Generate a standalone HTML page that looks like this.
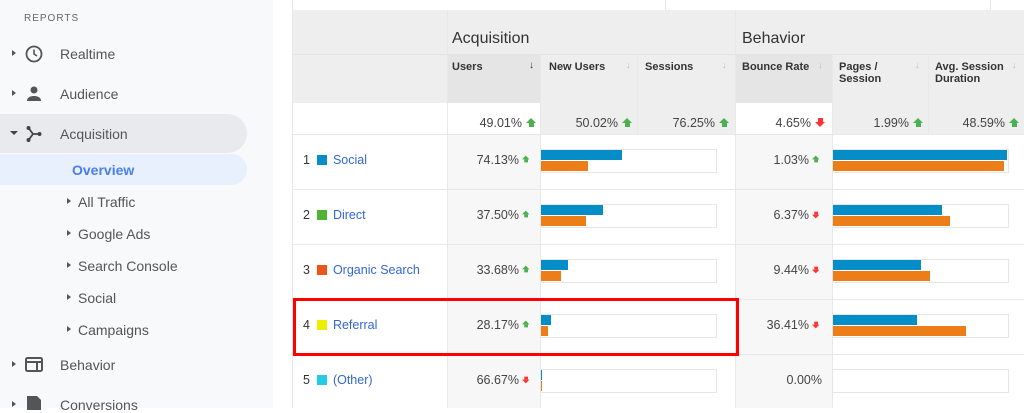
<!DOCTYPE html><html><head><style>
*{margin:0;padding:0;box-sizing:border-box}
body{width:1024px;height:408px;overflow:hidden;background:#fff;font-family:"Liberation Sans",sans-serif;position:relative;color:#444}
.a{position:absolute}
.sb{left:0;top:0;width:273px;height:408px;background:#f8f9fa}
.ni{position:absolute;font-size:14px;color:#555;line-height:16px}
.tri{position:absolute;width:0;height:0;border-top:3.5px solid transparent;border-bottom:3.5px solid transparent;border-left:4px solid #555}
.g{background:#eee}
.hd{font-size:11px;font-weight:bold;color:#333;line-height:12px}
.ar{font-size:9px;color:#bbb}
.v{font-size:12.5px;color:#444;text-align:right}
.up{display:inline-block;width:0;height:0;border-left:5px solid transparent;border-right:5px solid transparent;border-bottom:5px solid #4caf50;position:relative;top:-4px;margin-left:4px}
.up:after{content:"";position:absolute;left:-2.5px;top:5px;width:5px;height:4px;background:#4caf50}
.dn{display:inline-block;width:0;height:0;border-left:5px solid transparent;border-right:5px solid transparent;border-top:5px solid #f33;position:relative;top:0px;margin-left:4px}
.dn:before{content:"";position:absolute;left:-2.5px;top:-9px;width:5px;height:4px;background:#f33}
.sm{transform:scale(.75);transform-origin:left center;margin-left:3px}
.box{position:absolute;border:1px solid #e6e6e6;height:24px;background:#fff}
.b{position:absolute;height:10px;background:#058dc7}
.o{position:absolute;height:10px;background:#ed7e17}
.hl{position:absolute;height:1px;background:#e8e8e8;left:292px;width:732px}
.vl{position:absolute;width:1px;background:#e8e8e8}
.dim{font-size:12.5px;color:#333}
.dim span.lnk{color:#3367d6}
.sq{display:inline-block;width:10px;height:10px;margin:0 6px 0 7px;vertical-align:-1px}
</style></head><body>
<div class="a sb"></div>
<div class="a" style="left:24px;top:13px;font-size:10px;letter-spacing:1px;color:#666">REPORTS</div>
<div class="a" style="left:0;top:114px;width:247px;height:39px;background:#e8eaed;border-radius:0 20px 20px 0"></div>
<div class="a" style="left:0;top:154px;width:247px;height:31px;background:#e8f0fe;border-radius:0 16px 16px 0"></div>
<div class="tri" style="left:12px;top:50px"></div>
<div class="tri" style="left:12px;top:90px"></div>
<div class="a" style="left:10px;top:131px;width:0;height:0;border-left:4px solid transparent;border-right:4px solid transparent;border-top:4px solid #444"></div>
<div class="tri" style="left:12px;top:361px"></div>
<div class="tri" style="left:12px;top:401px"></div>
<svg class="a" style="left:24px;top:44px" width="20" height="20"><circle cx="10" cy="10" r="7.5" fill="none" stroke="#555" stroke-width="1.8"/><path d="M10 5.5V10l3 2" fill="none" stroke="#555" stroke-width="1.6"/></svg>
<svg class="a" style="left:25px;top:85px" width="18" height="18"><circle cx="9" cy="5" r="3.5" fill="#555"/><path d="M2 16c0-4 4-5 7-5s7 1 7 5z" fill="#555"/></svg>
<svg class="a" style="left:25px;top:125px" width="18" height="18"><circle cx="3.5" cy="3" r="2" fill="#444"/><circle cx="3.5" cy="15" r="2" fill="#444"/><circle cx="14.5" cy="9" r="2" fill="#444"/><path d="M3.5 3L8 9L3.5 15M8 9h6" fill="none" stroke="#444" stroke-width="1.8"/></svg>
<svg class="a" style="left:25px;top:357px" width="18" height="16"><rect x="1" y="1" width="16" height="13" rx="1.5" fill="none" stroke="#555" stroke-width="2"/><rect x="1" y="4" width="16" height="2" fill="#555"/><rect x="11" y="6" width="2" height="8" fill="#555"/></svg>
<svg class="a" style="left:26px;top:396px" width="16" height="14"><path d="M1 0h10l4 4v10H1z" fill="#555"/></svg>
<div class="ni" style="left:60px;top:46px">Realtime</div>
<div class="ni" style="left:60px;top:86px">Audience</div>
<div class="ni" style="left:60px;top:126px">Acquisition</div>
<div class="ni" style="left:72px;top:162px;color:#4a7ee8;font-weight:bold">Overview</div>
<div class="tri" style="left:67px;top:198px"></div><div class="ni" style="left:78px;top:194px">All Traffic</div>
<div class="tri" style="left:67px;top:230px"></div><div class="ni" style="left:78px;top:226px">Google Ads</div>
<div class="tri" style="left:67px;top:262px"></div><div class="ni" style="left:78px;top:258px">Search Console</div>
<div class="tri" style="left:67px;top:294px"></div><div class="ni" style="left:78px;top:290px">Social</div>
<div class="tri" style="left:67px;top:326px"></div><div class="ni" style="left:78px;top:322px">Campaigns</div>
<div class="ni" style="left:60px;top:357px">Behavior</div>
<div class="ni" style="left:60px;top:397px">Conversions</div>

<div class="vl" style="left:665px;top:0;height:10px"></div>
<div class="vl" style="left:990px;top:0;height:10px"></div>
<div class="vl" style="left:292px;top:0;height:408px"></div>
<div class="a g" style="left:293px;top:10px;width:731px;height:93px"></div>
<div class="a" style="left:293px;top:54px;width:731px;height:1px;background:#e4e4e4"></div>
<div class="a" style="left:447px;top:55px;width:93px;height:48px;background:#e5e5e5"></div>
<div class="a" style="left:735px;top:55px;width:97px;height:48px;background:#e5e5e5"></div>
<div class="a" style="left:452px;top:30px;font-size:16px;color:#333">Acquisition</div>
<div class="a" style="left:742px;top:30px;font-size:16px;color:#333">Behavior</div>
<div class="a hd" style="left:452px;top:61px">Users</div><div class="a" style="left:529px;top:60px;font-size:10px;color:#333">↓</div>
<div class="a hd" style="left:549px;top:61px">New Users</div><div class="a ar" style="left:626px;top:60px">↓</div>
<div class="a hd" style="left:645px;top:61px">Sessions</div><div class="a ar" style="left:722px;top:60px">↓</div>
<div class="a hd" style="left:742px;top:61px">Bounce Rate</div><div class="a ar" style="left:818px;top:60px">↓</div>
<div class="a hd" style="left:839px;top:61px">Pages /<br>Session</div><div class="a ar" style="left:915px;top:60px">↓</div>
<div class="a hd" style="left:935px;top:61px">Avg. Session<br>Duration</div><div class="a ar" style="left:1012px;top:60px">↓</div>
<div class="a g" style="left:540px;top:103px;width:195px;height:31px"></div>
<div class="a g" style="left:832px;top:103px;width:192px;height:31px"></div>
<div class="a v" style="left:447px;top:116px;width:89px">49.01%<span class="up"></span></div>
<div class="a v" style="left:540px;top:116px;width:92px">50.02%<span class="up"></span></div>
<div class="a v" style="left:637px;top:116px;width:92px">76.25%<span class="up"></span></div>
<div class="a v" style="left:735px;top:116px;width:90px">4.65%<span class="dn"></span></div>
<div class="a v" style="left:832px;top:116px;width:91px">1.99%<span class="up"></span></div>
<div class="a v" style="left:928px;top:116px;width:91px">48.59%<span class="up"></span></div>
<div class="a" style="left:447px;top:134px;width:93px;height:274px;background:#f7f7f7"></div>
<div class="a" style="left:735px;top:134px;width:97px;height:274px;background:#f7f7f7"></div>
<div class="vl" style="left:447px;top:10px;height:398px"></div>
<div class="vl" style="left:540px;top:55px;height:353px"></div>
<div class="vl" style="left:637px;top:55px;height:79px"></div>
<div class="vl" style="left:735px;top:10px;height:398px"></div>
<div class="vl" style="left:832px;top:55px;height:353px"></div>
<div class="vl" style="left:928px;top:55px;height:79px"></div>
<div class="hl" style="top:134px"></div><div class="hl" style="top:189px"></div><div class="hl" style="top:244px"></div><div class="hl" style="top:299px"></div><div class="hl" style="top:354px"></div>

<div class="a dim" style="left:303px;top:153px">1<span class="sq" style="background:#058dc7"></span><span class="lnk">Social</span></div>
<div class="a dim" style="left:303px;top:208px">2<span class="sq" style="background:#50b432"></span><span class="lnk">Direct</span></div>
<div class="a dim" style="left:303px;top:263px">3<span class="sq" style="background:#ed561b"></span><span class="lnk">Organic Search</span></div>
<div class="a dim" style="left:303px;top:318px">4<span class="sq" style="background:#edef00"></span><span class="lnk">Referral</span></div>
<div class="a dim" style="left:303px;top:373px">5<span class="sq" style="background:#24cbe5"></span><span class="lnk">(Other)</span></div>

<div class="a v" style="left:447px;top:153px;width:85px">74.13%<span class="up sm"></span></div>
<div class="a v" style="left:447px;top:208px;width:85px">37.50%<span class="up sm"></span></div>
<div class="a v" style="left:447px;top:263px;width:85px">33.68%<span class="up sm"></span></div>
<div class="a v" style="left:447px;top:318px;width:85px">28.17%<span class="up sm"></span></div>
<div class="a v" style="left:447px;top:373px;width:85px">66.67%<span class="dn sm"></span></div>
<div class="a v" style="left:735px;top:153px;width:87px">1.03%<span class="up sm"></span></div>
<div class="a v" style="left:735px;top:208px;width:87px">6.37%<span class="dn sm"></span></div>
<div class="a v" style="left:735px;top:263px;width:87px">9.44%<span class="dn sm"></span></div>
<div class="a v" style="left:735px;top:318px;width:87px">36.41%<span class="dn sm"></span></div>
<div class="a v" style="left:735px;top:373px;width:87px">0.00%</div>

<div class="box" style="left:540px;top:149px;width:177px"></div><div class="b" style="left:541px;top:150px;width:81px"></div><div class="o" style="left:541px;top:161px;width:47px"></div>
<div class="box" style="left:540px;top:204px;width:177px"></div><div class="b" style="left:541px;top:205px;width:62px"></div><div class="o" style="left:541px;top:216px;width:45px"></div>
<div class="box" style="left:540px;top:259px;width:177px"></div><div class="b" style="left:541px;top:260px;width:27px"></div><div class="o" style="left:541px;top:271px;width:20px"></div>
<div class="box" style="left:540px;top:314px;width:177px"></div><div class="b" style="left:541px;top:315px;width:10px"></div><div class="o" style="left:541px;top:326px;width:7px"></div>
<div class="box" style="left:540px;top:369px;width:177px"></div><div class="b" style="left:541px;top:370px;width:1px"></div><div class="o" style="left:541px;top:381px;width:1px"></div>
<div class="box" style="left:832px;top:149px;width:177px"></div><div class="b" style="left:833px;top:150px;width:174px"></div><div class="o" style="left:833px;top:161px;width:171px"></div>
<div class="box" style="left:832px;top:204px;width:177px"></div><div class="b" style="left:833px;top:205px;width:109px"></div><div class="o" style="left:833px;top:216px;width:117px"></div>
<div class="box" style="left:832px;top:259px;width:177px"></div><div class="b" style="left:833px;top:260px;width:88px"></div><div class="o" style="left:833px;top:271px;width:97px"></div>
<div class="box" style="left:832px;top:314px;width:177px"></div><div class="b" style="left:833px;top:315px;width:84px"></div><div class="o" style="left:833px;top:326px;width:133px"></div>
<div class="box" style="left:832px;top:369px;width:177px"></div>

<div class="a" style="left:293px;top:298px;width:446px;height:58px;border:3px solid #f00"></div>
</body></html>
